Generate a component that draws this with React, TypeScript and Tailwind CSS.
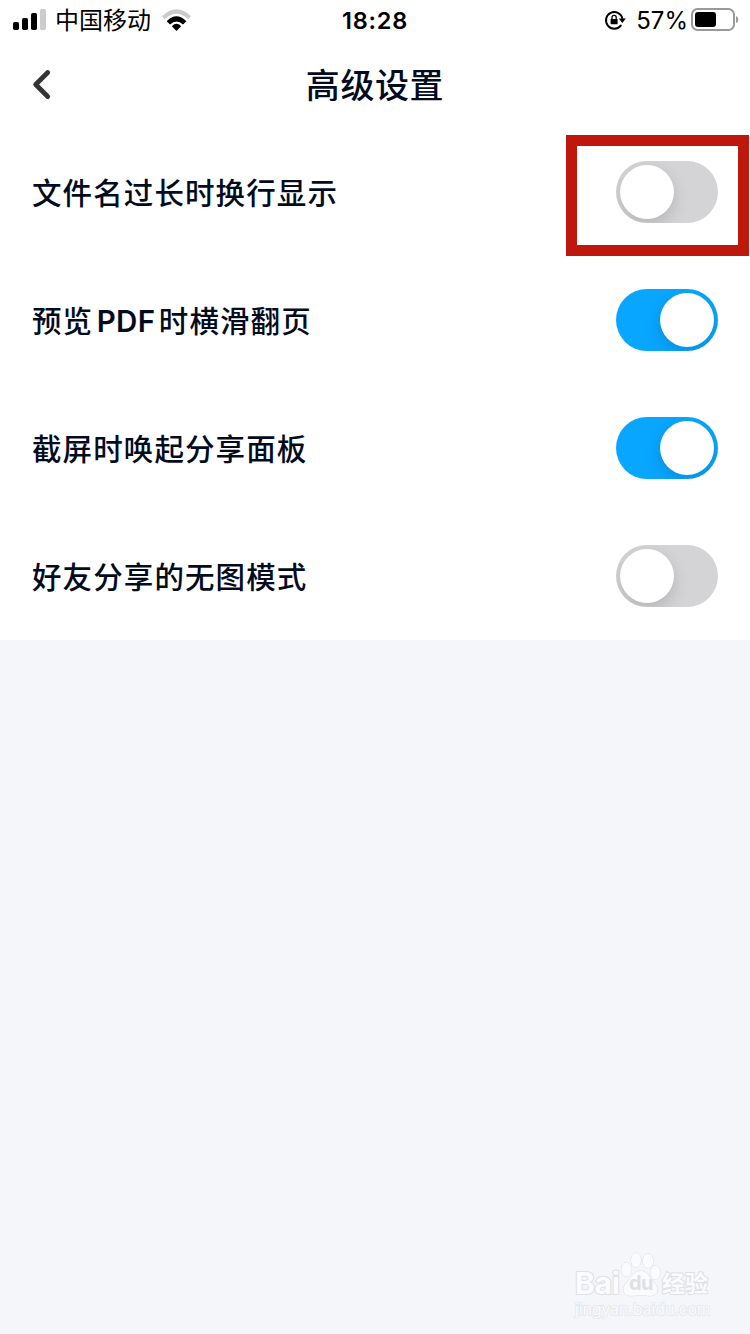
import { useState } from 'react';

const SETTINGS = [
    { id: 'wrap', label: ['文件名过长时换行显示'], enabled: false, highlighted: true },
    { id: 'pdf', label: ['预览', 'PDF', '时横滑翻页'], enabled: true },
    { id: 'capture', label: ['截屏时唤起分享面板'], enabled: true },
    { id: 'no-image', label: ['好友分享的无图模式'], enabled: false },
];

const StatusBar = () => (
    <div className="grid h-10 grid-cols-[1fr_auto_1fr] items-center text-black">
        <div className="flex items-center">
            <svg className="ml-[13px] h-[22px] w-[33px]" viewBox="0 0 33 22">
                <rect x="0" y="13" width="6" height="8" rx="1.7" />
                <rect x="9" y="9" width="6" height="12" rx="1.7" />
                <rect x="18" y="4" width="6" height="17" rx="1.7" />
                <rect x="27" y="0" width="6" height="21" rx="1.7" fill="#cbcbcb" />
            </svg>
            <span className="ml-[9px] pt-[2px] text-[24px] leading-[38px]">中国移动</span>
            <svg className="ml-[11px] h-[22px] w-[29px]" viewBox="0 0 29 22">
                <path d="M0 7.2Q14.5-6.7 29 7.2L26.3 10.2Q14.5-.8 2.7 10.2Z" fill="#cbcbcb" />
                <path d="M4.7 12.2Q14.5 2.5 24.3 12.2L21 15.6Q14.5 9.2 8 15.6Z" />
                <path d="M9.8 17.2Q14.5 12.5 19.2 17.2L14.5 21.9Z" />
            </svg>
        </div>
        <span className="pt-[2px] text-[23.5px] leading-[38px] font-semibold tracking-[0.8px]">18:28</span>
        <div className="flex items-center justify-end">
            <svg className="h-[22px] w-[22px]" viewBox="0 0 22 22">
                <path
                    d="M16.8 16.6A8.3 8.3 0 1 1 18.4 9.6"
                    fill="none"
                    stroke="black"
                    strokeWidth="2"
                    strokeLinecap="round"
                />
                <path d="M14.8 9.4h7L18.3 14Z" />
                <rect x="6.6" y="10" width="7" height="5.3" rx=".6" />
                <path d="M8 10.4V8.5a2.1 2.1 0 0 1 4.2 0v1.9" fill="none" stroke="black" strokeWidth="1.3" />
            </svg>
            <span className="ml-[10px] pt-[2px] text-[24px] leading-[38px]">57%</span>
            <svg className="mr-[11px] ml-[3px] h-6 w-[48px]" viewBox="0 0 48 24">
                <rect x="1" y="1" width="42" height="21" rx="5.5" fill="none" stroke="#999" strokeWidth="2" />
                <rect x="4" y="4" width="21" height="15" rx="3" />
                <path d="M45 8Q47.3 8.6 47.3 11.5T45 15Z" fill="#999" />
            </svg>
        </div>
    </div>
);

const TitleBar = () => (
    <header className="grid h-[88px] grid-cols-[1fr_auto_1fr] items-center">
        <button className="ml-[32px] w-5" aria-label="返回">
            <svg className="h-8 w-5" viewBox="0 0 20 32">
                <path
                    d="M15.7 4.5L3.7 16.5L15.7 28.5"
                    fill="none"
                    stroke="#333"
                    strokeWidth="4.8"
                    strokeLinecap="round"
                    strokeLinejoin="round"
                />
            </svg>
        </button>
        <h1 className="pt-[2px] text-[34px] font-medium tracking-[0.6px] text-[#030b1f]">高级设置</h1>
    </header>
);

interface SwitchProps {
    label: string;
    checked: boolean;
    onChange: () => void;
}

const Switch = ({ label, checked, onChange }: SwitchProps) => (
    <button
        role="switch"
        aria-label={label}
        aria-checked={checked}
        onClick={onChange}
        className={`flex h-[62px] w-[102px] items-center overflow-hidden rounded-full px-1 ${
            checked ? 'justify-end bg-[#09a6ff]' : 'justify-start bg-[#d4d4d6]'
        }`}
    >
        <span className="size-[54px] rounded-full bg-white shadow-[0_6px_16px_rgba(0,0,0,0.15)]" />
    </button>
);

const Watermark = () => (
    <div className="absolute right-[39px] bottom-[16px] flex w-[136px] flex-col text-[#fafbfd] [-webkit-text-stroke:2px_#dfe0e4] [paint-order:stroke_fill]">
        <div className="flex h-[46px] items-end">
            <span className="w-[45px] text-[30px] leading-[30px] font-bold tracking-[-0.3px]">Bai</span>
            <div className="relative h-[46px] w-[41px]">
                <svg className="h-[46px] w-[41px]" viewBox="0 0 41 46" fill="#fafbfd" stroke="#d9dade">
                    <ellipse cx="6.5" cy="17.5" rx="5.2" ry="6.7" />
                    <ellipse cx="16" cy="8.2" rx="5" ry="7.2" />
                    <ellipse cx="28" cy="9" rx="5.2" ry="7" />
                    <ellipse cx="35.3" cy="20.5" rx="5" ry="6.7" />
                    <path d="M20.5 19C13 19 12 25 7 30C3.5 33.5 2 39 5.5 42C10 45.5 15 43 20.5 43S31 45.5 35.5 42C39 38.5 37 33.5 33.5 30C29 25 28 19 20.5 19Z" />
                </svg>
                <span className="absolute bottom-[5px] left-[9px] text-[20px] leading-5 font-bold tracking-[-0.5px] text-[#dfe0e4] [-webkit-text-stroke:0px]">
                    du
                </span>
            </div>
            <span className="ml-px text-[23px] leading-[28px] font-bold">经验</span>
        </div>
        <span className="pt-1 text-[15.5px] leading-[16px] tracking-[0.1px] [-webkit-text-stroke:1.5px_#e4e5e9]">
            jingyan.baidu.com
        </span>
    </div>
);

export default function App() {
    const [settings, setSettings] = useState(SETTINGS);

    const toggle = (id: string) => {
        setSettings((prev) => prev.map((s) => (s.id === id ? { ...s, enabled: !s.enabled } : s)));
    };

    return (
        <div className="relative h-[1334px] w-[750px] overflow-hidden bg-[#f4f6fa] font-['Inter','Noto_Sans_CJK_SC',sans-serif]">
            <div className="bg-white">
                <StatusBar />
                <TitleBar />
                <main>
                    {settings.map(({ id, label, enabled, highlighted }) => (
                        <div key={id} className="relative flex h-32 items-center justify-between px-8">
                            <div className="flex gap-[3.5px] pt-[2px] text-[29.5px] font-medium tracking-[1.1px] text-[#030b1f]">
                                {label.map((part) => (
                                    <span key={part} className={part === 'PDF' ? 'font-semibold tracking-[0.3px]' : ''}>
                                        {part}
                                    </span>
                                ))}
                            </div>
                            <Switch label={label.join('')} checked={enabled} onChange={() => toggle(id)} />
                            {highlighted && (
                                <div className="pointer-events-none absolute top-[7px] right-[1px] h-[121px] w-[183px] border-[11px] border-[#bd180b]" />
                            )}
                        </div>
                    ))}
                </main>
            </div>
            <Watermark />
        </div>
    );
}
